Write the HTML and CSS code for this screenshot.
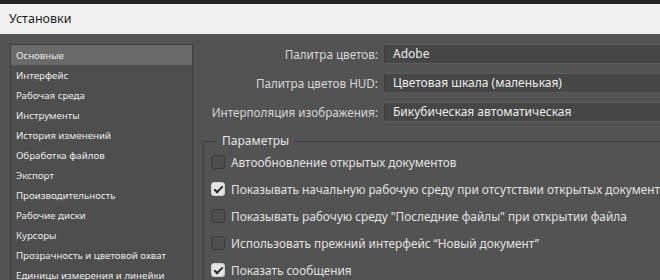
FILE: index.html
```html
<!DOCTYPE html>
<html lang="ru">
<head>
    <meta charset="UTF-8">
    <title>Установки</title>
    <link rel="stylesheet" href="styles.css">
</head>
<body>
    <div class="top-strip"></div>
    <div class="title-bar">Установки</div>

    <div class="main">
        <!-- Category list -->
        <ul class="sidebar">
            <li class="active">Основные</li>
            <li>Интерфейс</li>
            <li>Рабочая среда</li>
            <li>Инструменты</li>
            <li>История изменений</li>
            <li>Обработка файлов</li>
            <li>Экспорт</li>
            <li>Производительность</li>
            <li>Рабочие диски</li>
            <li>Курсоры</li>
            <li>Прозрачность и цветовой охват</li>
            <li>Единицы измерения и линейки</li>
        </ul>

        <div class="pane">
            <div class="form-grid">
                <label class="field-label">Палитра цветов:</label>
                <div class="select">Adobe</div>

                <label class="field-label">Палитра цветов HUD:</label>
                <div class="select">Цветовая шкала (маленькая)</div>

                <label class="field-label">Интерполяция изображения:</label>
                <div class="select">Бикубическая автоматическая</div>
            </div>

            <fieldset class="group">
                <legend>Параметры</legend>
                <div class="check-row"><span class="checkbox"></span>Автообновление открытых документов</div>
                <div class="check-row"><span class="checkbox checked"></span>Показывать начальную рабочую среду при отсутствии открытых документов</div>
                <div class="check-row"><span class="checkbox"></span>Показывать рабочую среду "Последние файлы" при открытии файла</div>
                <div class="check-row"><span class="checkbox"></span>Использовать прежний интерфейс “Новый документ”</div>
                <div class="check-row"><span class="checkbox checked"></span>Показать сообщения</div>
            </fieldset>
        </div>
    </div>
</body>
</html>
```

FILE: styles.css
```css
* {
    margin: 0;
    padding: 0;
    box-sizing: border-box;
}

body {
    font-family: 'Noto Sans', 'Open Sans', sans-serif;
    background: #535353;
    color: #e0e0e0;
    width: 660px;
    height: 280px;
    overflow: hidden;
}

.top-strip {
    height: 4px;
    background: #242424;
}

.title-bar {
    height: 30px;
    line-height: 30px;
    padding-left: 9px;
    background: #f1f1f1;
    color: #1e1e1e;
    font-size: 12.5px;
}

.main {
    display: flex;
    padding: 10px 0 0 10px;
}

/* Sidebar */
.sidebar {
    list-style: none;
    width: 183px;
    height: 260px;
    flex-shrink: 0;
    background: #4e4e4e;
    border: 1px solid #3d3d3d;
    font-size: 9.7px;
    color: #ececec;
}

.sidebar li {
    height: 20px;
    line-height: 21px;
    padding-left: 5px;
    white-space: nowrap;
}

.sidebar li.active {
    background: #6a6a6a;
}

/* Right pane */
.pane {
    margin-left: 10px;
    flex: 1;
    min-width: 0;
}

.form-grid {
    display: grid;
    grid-template-columns: 175px 320px;
    column-gap: 6px;
    row-gap: 9px;
    font-size: 12px;
}

.field-label {
    text-align: right;
    line-height: 20px;
    font-size: 11.7px;
    color: #d8d8d8;
    white-space: nowrap;
}

.select {
    height: 20px;
    line-height: 18px;
    padding-left: 8px;
    background: #464646;
    border: 1px solid #3c3c3c;
    border-top-color: #5c5c5c;
    border-bottom-color: #5c5c5c;
    color: #ececec;
    white-space: nowrap;
}

/* Options group */
.group {
    margin-top: 11px;
    width: 470px;
    border: 1px solid #3e3e3e;
    border-right: none;
    padding: 0 0 0 7px;
    font-size: 11.8px;
}

.group legend {
    margin-left: 5px;
    padding: 0 6px;
    line-height: 16px;
    font-size: 12px;
    color: #e4e4e4;
}

.check-row {
    display: flex;
    align-items: center;
    gap: 6px;
    height: 27px;
    white-space: nowrap;
    color: #e2e2e2;
}

.check-row:first-of-type {
    margin-top: -1px;
}

.checkbox {
    width: 14px;
    height: 14px;
    flex-shrink: 0;
    border: 1px solid #3a3a3a;
    border-radius: 3px;
    background: #4e4e4e;
    position: relative;
}

.checkbox.checked {
    background: #e4e4e4;
    border-color: #d0d0d0;
}

.checkbox.checked::after {
    content: '';
    position: absolute;
    left: 4px;
    top: 1px;
    width: 3px;
    height: 7px;
    border: solid #2a2a2a;
    border-width: 0 2px 2px 0;
    transform: rotate(45deg);
}
```
